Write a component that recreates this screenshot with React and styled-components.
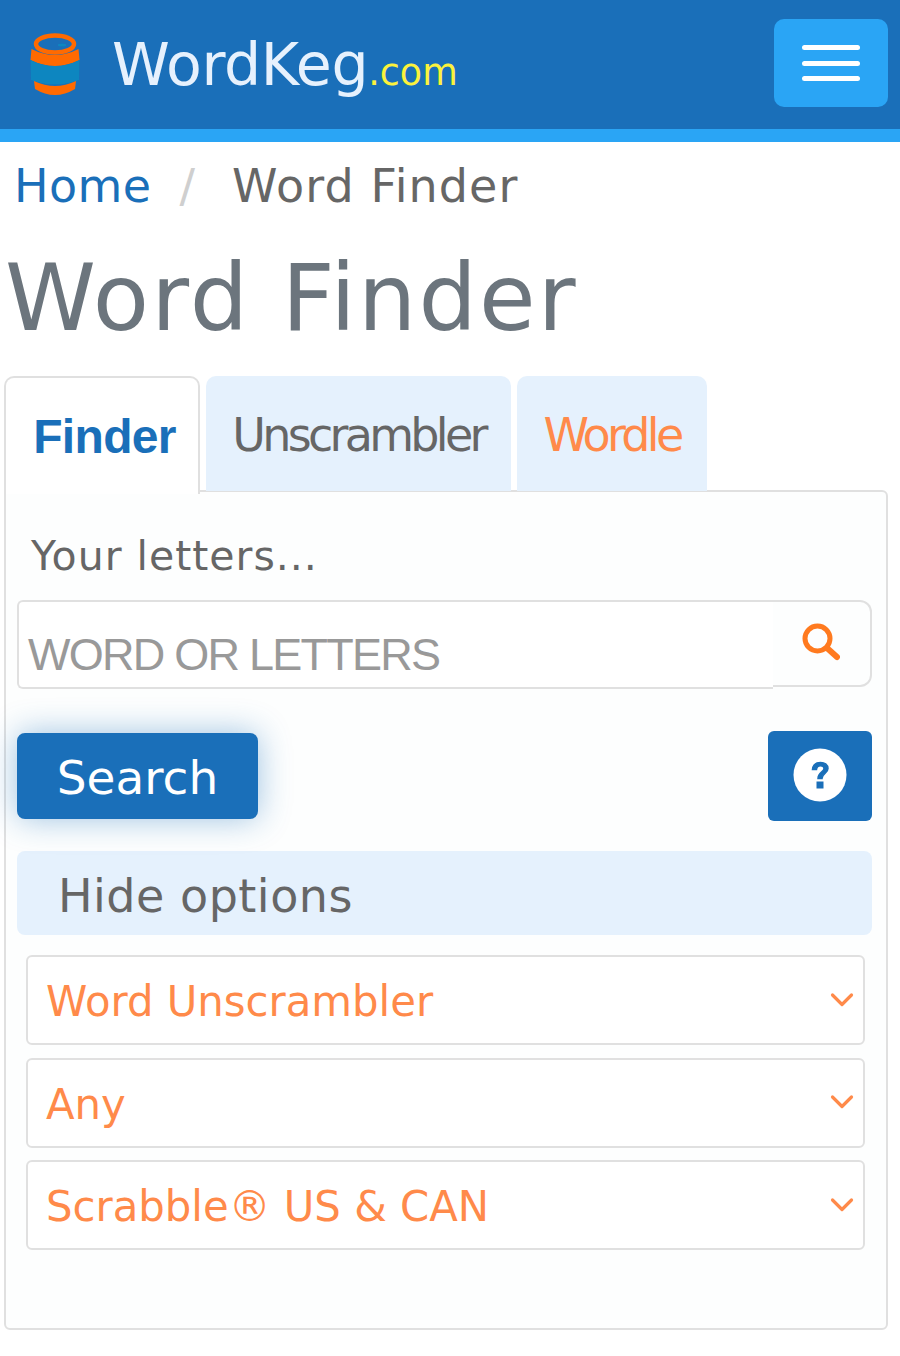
import React from 'react';
import styled, { createGlobalStyle } from 'styled-components';

const GlobalStyle = createGlobalStyle`
    html, body {
        margin: 0;
        padding: 0;
        background: #fff;
    }
    * {
        box-sizing: border-box;
    }
`;

const Page = styled.div`
    width: 900px;
    height: 1356px;
    overflow: hidden;
    font-family: 'DejaVu Sans', Verdana, sans-serif;
    color: #666;
`;

const Header = styled.header`
    height: 142px;
    background-color: #1a6fb9;
    border-bottom: 13px solid #2aa5f5;
    display: flex;
    align-items: center;
    padding: 0 12px 0 30px;
`;

const Logo = styled.div`
    display: flex;
    align-items: center;
    gap: 32px;
    flex: 1;
`;

const Brand = styled.div`
    font-size: 58.5px;
    letter-spacing: -0.4px;
    color: #e6f1fd;
    line-height: 1;
    margin-top: 1px;
`;

const BrandSuffix = styled.span`
    font-size: 36.5px;
    letter-spacing: 0;
    color: #fbf23c;
`;

const MenuButton = styled.button`
    width: 114px;
    height: 88px;
    margin-top: -3px;
    background-color: #2aa5f5;
    border: none;
    border-radius: 10px;
    display: flex;
    flex-direction: column;
    align-items: center;
    justify-content: center;
    gap: 10.5px;
    padding: 0;
`;

const MenuBar = styled.span`
    width: 58px;
    height: 5px;
    border-radius: 3px;
    background-color: #fff;
`;

const Crumbs = styled.nav`
    height: 88px;
    padding: 16px 0 0 14px;
    display: flex;
    font-size: 46px;
    letter-spacing: 1.1px;
    line-height: 56px;
`;

const CrumbLink = styled.a`
    color: #1a6fb9;
    letter-spacing: 0.4px;
`;

const CrumbSep = styled.span`
    color: #cfcfcf;
    margin: 0 36px 0 28px;
`;

const Title = styled.h1`
    margin: 0;
    height: 146px;
    padding-left: 5px;
    font-size: 92px;
    letter-spacing: 2.2px;
    font-weight: 400;
    line-height: 138px;
    color: #6c757d;
`;

const Tabs = styled.div`
    display: flex;
    gap: 6px;
    padding-left: 4px;
    height: 114px;
    position: relative;
    z-index: 1;
`;

const Tab = styled.div`
    height: ${props => props.$active ? '118px' : '115px'};
    width: ${props => props.$w}px;
    padding-top: 31px;
    padding-left: ${props => props.$active ? '5px' : '0'};
    text-align: center;
    font-size: ${props => props.$active ? '48px' : '46px'};
    line-height: 56px;
    letter-spacing: ${props => props.$active ? '-0.7px' : '-3.7px'};
    border-radius: 10px 10px 0 0;
    font-family: ${props => props.$active ? "'Liberation Sans', Arial, sans-serif" : "'DejaVu Sans', Verdana, sans-serif"};
    font-weight: ${props => props.$active ? 700 : 400};
    color: ${props => props.$color};
    background-color: ${props => props.$active ? '#fff' : '#e5f1fd'};
    border: ${props => props.$active ? '2px solid #e0e0e0' : 'none'};
    border-bottom: none;
`;

const Panel = styled.div`
    width: 884px;
    height: 840px;
    margin-left: 4px;
    border: 2px solid #e0e0e0;
    border-radius: 0 6px 6px 6px;
    background-color: #fdfefe;
    padding: 0 14px 0 11px;
`;

const FieldLabel = styled.div`
    font-size: 41px;
    letter-spacing: 1px;
    line-height: 50px;
    padding: 39px 0 19px 14px;
    height: 108px;
`;

const SearchBox = styled.div`
    height: 87px;
    display: flex;
    align-items: stretch;
`;

const SearchInput = styled.div`
    width: 756px;
    height: 89px;
    border: 2px solid #e0e0e0;
    border-right: none;
    border-radius: 6px 0 0 6px;
    background-color: #fff;
    padding: 26px 0 0 9px;
    font-family: 'Liberation Sans', Arial, sans-serif;
    font-size: 45px;
    line-height: 54px;
    letter-spacing: -1.75px;
    color: #999;
`;

const SearchAddon = styled.div`
    flex: 1;
    border: 2px solid #e0e0e0;
    border-left: none;
    border-radius: 0 12px 12px 0;
    display: flex;
    align-items: center;
    padding: 0 0 4px 29px;
`;

const Actions = styled.div`
    display: flex;
    justify-content: space-between;
    align-items: flex-start;
    margin-top: 44px;
`;

const SearchButton = styled.button`
    width: 241px;
    height: 86px;
    margin-top: 2px;
    border: none;
    border-radius: 8px;
    background-color: #1a6fb9;
    color: #fff;
    font-family: inherit;
    font-size: 47px;
    box-shadow: 0 0 32px rgba(26, 111, 185, 0.42);
    padding: 2px 0 0;
`;

const HelpButton = styled.button`
    width: 104px;
    height: 90px;
    border: none;
    border-radius: 6px;
    background-color: #1a6fb9;
    display: flex;
    align-items: center;
    justify-content: center;
    padding: 0 0 2px;
`;

const OptionsToggle = styled.div`
    height: 84px;
    margin-top: 30px;
    border-radius: 8px;
    background-color: #e5f1fd;
    padding-left: 41px;
    font-size: 46px;
    letter-spacing: 0.5px;
    line-height: 90px;
`;

const Selects = styled.div`
    display: flex;
    flex-direction: column;
    gap: 12.5px;
    margin: 20px 7px 0 9px;
`;

const Select = styled.div`
    height: 90px;
    border: 2px solid #e0e0e0;
    border-radius: 6px;
    background-color: #fff;
    display: flex;
    align-items: center;
    justify-content: space-between;
    padding: 3px 8px 0 18px;
    font-size: 41.8px;
    color: #ff8a4a;
`;

const ChevronSvg = styled.svg`
    margin-bottom: 4px;
`;

function KegLogo() {
    return (
        <svg width="50" height="64" viewBox="0 0 50 64">
            <defs>
                <filter id="kegSoft" x="-10%" y="-10%" width="120%" height="120%">
                    <feGaussianBlur stdDeviation="0.5" />
                </filter>
            </defs>
            <g filter="url(#kegSoft)">
                <ellipse cx="25" cy="11" rx="19" ry="8.5" fill="none" stroke="#ff6a00" strokeWidth="4.500" />
                <ellipse cx="32" cy="12" rx="4" ry="1.5" fill="#0a86c0" />
                <path d="M1.500 16Q25 28 48.500 16L49.500 27Q25 39 0.500 27Z" fill="#ff6a00" />
                <path d="M0.500 27Q25 39 49.500 27L49 47Q25 56 1 47Z" fill="#0a86c0" />
                <path d="M4 48Q25 58 46 48L45 56Q25 68 5 56Z" fill="#ff6a00" />
            </g>
        </svg>
    );
}

function SearchIcon() {
    return (
        <svg width="38" height="38" viewBox="0 0 38 38">
            <circle cx="15.5" cy="15.5" r="12.5" fill="none" stroke="#ff7a1f" strokeWidth="5" />
            <path d="M25 25L35 34" stroke="#ff7a1f" strokeWidth="6" strokeLinecap="round" />
        </svg>
    );
}

function HelpIcon() {
    return (
        <svg width="54" height="54" viewBox="0 0 54 54">
            <circle cx="27" cy="27" r="26.5" fill="#fff" />
            <path d="M19.5 21.5C20 16.5 23 14.5 27.5 14.5C32 14.5 35 17 35 20.5C35 25.5 29 25.5 29 30.5H25C25 24 31 24 31 20.5C31 18.5 29.500 17.800 27.500 17.800C25 17.800 23.800 19 23.500 21.500Z" fill="#1a6fb9" stroke="#1a6fb9" strokeWidth="1.5" />
            <rect x="23.500" y="33.500" width="7" height="7" fill="#1a6fb9" />
        </svg>
    );
}

function ChevronIcon() {
    return (
        <ChevronSvg width="26" height="16" viewBox="0 0 26 16">
            <path d="M3.500 3L13 12.500L22.500 3" fill="none" stroke="#ff8a4a" strokeWidth="3.2" strokeLinecap="round" strokeLinejoin="round" />
        </ChevronSvg>
    );
}

const selects = ['Word Unscrambler', 'Any', 'Scrabble® US & CAN'];

export default function App() {
    return (
        <Page>
            <GlobalStyle />
            <Header>
                <Logo>
                    <KegLogo />
                    <Brand>WordKeg<BrandSuffix>.com</BrandSuffix></Brand>
                </Logo>
                <MenuButton>
                    <MenuBar />
                    <MenuBar />
                    <MenuBar />
                </MenuButton>
            </Header>
            <Crumbs>
                <CrumbLink>Home</CrumbLink>
                <CrumbSep>/</CrumbSep>
                <span>Word Finder</span>
            </Crumbs>
            <Title>Word Finder</Title>
            <Tabs>
                <Tab $active $w={196} $color="#1a6fb9">Finder</Tab>
                <Tab $w={305} $color="#666">Unscrambler</Tab>
                <Tab $w={190} $color="#ff8a4a">Wordle</Tab>
            </Tabs>
            <Panel>
                <FieldLabel>Your letters...</FieldLabel>
                <SearchBox>
                    <SearchInput>WORD OR LETTERS</SearchInput>
                    <SearchAddon><SearchIcon /></SearchAddon>
                </SearchBox>
                <Actions>
                    <SearchButton>Search</SearchButton>
                    <HelpButton><HelpIcon /></HelpButton>
                </Actions>
                <OptionsToggle>Hide options</OptionsToggle>
                <Selects>
                    {selects.map(s => (
                        <Select key={s}>
                            {s}
                            <ChevronIcon />
                        </Select>
                    ))}
                </Selects>
            </Panel>
        </Page>
    );
}
